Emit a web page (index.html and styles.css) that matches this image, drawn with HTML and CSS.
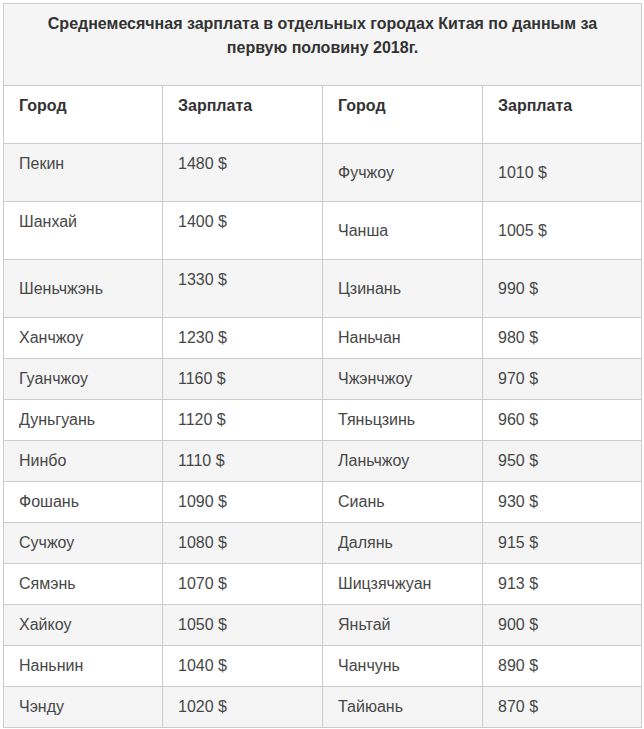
FILE: index.html
```html
<!DOCTYPE html>
<html lang="ru">
<head>
<meta charset="utf-8">
<title>Зарплаты в городах Китая</title>
<link rel="stylesheet" href="styles.css">
</head>
<body>
<div class="wrap">
<table class="salary">
  <colgroup><col class="c1"><col class="c2"><col class="c3"><col class="c4"></colgroup>
  <tbody>
    <tr class="title"><td colspan="4"><p>Среднемесячная зарплата в отдельных городах Китая по данным за первую половину 2018г.</p></td></tr>
    <tr class="head"><td><p>Город</p></td><td><p>Зарплата</p></td><td><p>Город</p></td><td><p>Зарплата</p></td></tr>
    <tr><td><p>Пекин</p></td><td><p>1480 $</p></td><td>Фучжоу</td><td>1010 $</td></tr>
    <tr><td><p>Шанхай</p></td><td><p>1400 $</p></td><td>Чанша</td><td>1005 $</td></tr>
    <tr><td>Шеньчжэнь</td><td><p>1330 $</p></td><td>Цзинань</td><td>990 $</td></tr>
    <tr><td>Ханчжоу</td><td>1230 $</td><td>Наньчан</td><td>980 $</td></tr>
    <tr><td>Гуанчжоу</td><td>1160 $</td><td>Чжэнчжоу</td><td>970 $</td></tr>
    <tr><td>Дуньгуань</td><td>1120 $</td><td>Тяньцзинь</td><td>960 $</td></tr>
    <tr><td>Нинбо</td><td>1110 $</td><td>Ланьчжоу</td><td>950 $</td></tr>
    <tr><td>Фошань</td><td>1090 $</td><td>Сиань</td><td>930 $</td></tr>
    <tr><td>Сучжоу</td><td>1080 $</td><td>Далянь</td><td>915 $</td></tr>
    <tr><td>Сямэнь</td><td>1070 $</td><td>Шицзячжуан</td><td>913 $</td></tr>
    <tr><td>Хайкоу</td><td>1050 $</td><td>Яньтай</td><td>900 $</td></tr>
    <tr><td>Наньнин</td><td>1040 $</td><td>Чанчунь</td><td>890 $</td></tr>
    <tr><td>Чэнду</td><td>1020 $</td><td>Тайюань</td><td>870 $</td></tr>
  </tbody>
</table>
</div>
</body>
</html>
```

FILE: styles.css
```css
html, body {
  margin: 0;
  padding: 0;
  background: #ffffff;
}

.wrap {
  padding: 3px;
}

.salary {
  width: 638px;
  border-collapse: collapse;
  table-layout: fixed;
  font-family: "Liberation Sans", Arial, sans-serif;
  font-size: 16px;
  line-height: 24px;
  color: #474747;
}

.salary .c1 { width: 159px; }
.salary .c2 { width: 160px; }
.salary .c3 { width: 160px; }
.salary .c4 { width: 159px; }

.salary td {
  border: 1px solid #cccccc;
  padding: 8px 15px;
  vertical-align: middle;
  text-align: left;
}

.salary td p {
  margin: 0 0 17px 0;
}

.salary tr:nth-child(odd) td {
  background: #f5f5f5;
}

.salary tr.title td {
  text-align: center;
  font-weight: bold;
  color: #333333;
}

.salary tr.head td {
  font-weight: bold;
  color: #333333;
}
```
